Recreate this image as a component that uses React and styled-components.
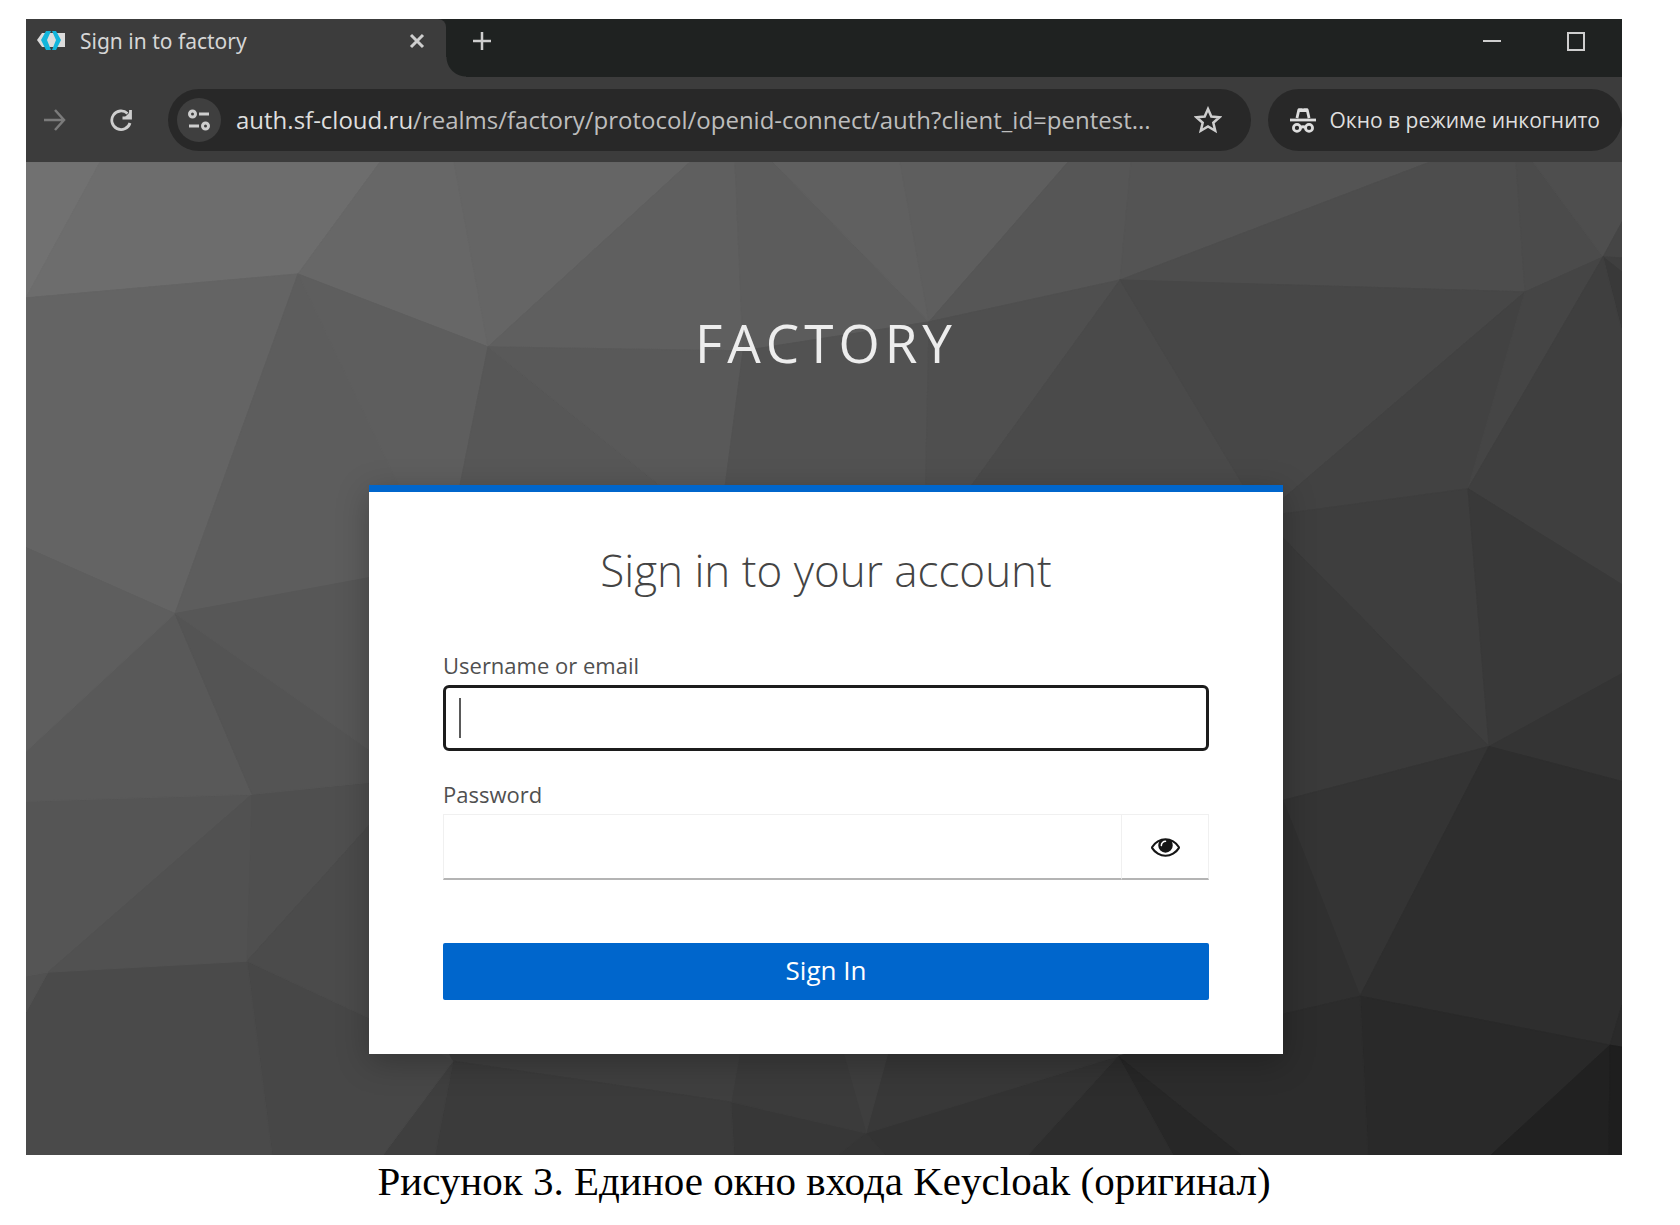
import React from "react";
import styled, { createGlobalStyle } from "styled-components";

const ui = '"Open Sans", "Noto Sans", sans-serif';

const GlobalStyle = createGlobalStyle`
  *, *::before, *::after { box-sizing: border-box; }
  body { margin: 0; background: #fff; }
  button, input { font: inherit; margin: 0; }
`;

const Figure = styled.figure`
  margin: 0;
  padding: 19px 58px 0 26px;
`;

const Caption = styled.figcaption`
  margin-top: 3px;
  font: 41px/46px "Liberation Serif", serif;
  color: #000;
  text-align: center;
`;

const BrowserWindow = styled.section`
  display: flex;
  flex-direction: column;
  overflow: hidden;
  background: #3c3c3c;
`;

const TabStrip = styled.header`
  display: flex;
  align-items: stretch;
  height: 58px;
  background: #1f2221;
`;

const Tab = styled.div`
  position: relative;
  display: flex;
  align-items: center;
  gap: 14px;
  width: 420px;
  padding: 0 20px 14px 10px;
  border-top-right-radius: 8px;
  background: #3c3c3c;
  color: #d6d6d6;
  font: 21px/30px "Noto Sans", "Open Sans", sans-serif;

  &::after {
    content: "";
    position: absolute;
    left: 100%;
    bottom: 0;
    width: 20px;
    height: 20px;
    background: radial-gradient(circle at 100% 0, #1f2221 19px, #3c3c3c 20px);
  }
`;

const TabTitle = styled.span`
  flex: 1;
  white-space: nowrap;
`;

const IconButton = styled.button`
  display: grid;
  place-items: center;
  flex: none;
  width: ${(p) => p.$size}px;
  height: ${(p) => p.$size}px;
  padding: 0;
  border: 0;
  border-radius: 50%;
  background: ${(p) => p.$fill || "transparent"};
  color: ${(p) => p.$color || "#cecece"};
`;

const StripActions = styled.div`
  display: flex;
  flex: 1;
  align-items: center;
  padding: 0 30px 14px 20px;
`;

const WindowControls = styled.div`
  display: flex;
  gap: 52px;
  margin-left: auto;
`;

const Toolbar = styled.nav`
  display: flex;
  align-items: center;
  height: 85px;
  padding-left: 7px;
`;

const NavButtons = styled.div`
  display: flex;
  gap: 22px;
  margin-right: 25px;
`;

const Pill = styled.div`
  display: flex;
  align-items: center;
  height: 62px;
  border-radius: 31px;
  background: #282828;
`;

const AddressBar = styled(Pill)`
  flex: 1;
  min-width: 0;
  gap: 15px;
  margin-right: 17px;
  padding: 0 23px 0 9px;
`;

const Url = styled.a`
  flex: 1;
  overflow: hidden;
  color: #bdbdbd;
  font: 24px/34px ${ui};
  text-decoration: none;
  text-overflow: ellipsis;
  white-space: nowrap;
`;

const Host = styled.span`
  color: #dedede;
`;

const IncognitoChip = styled(Pill)`
  gap: 14px;
  padding: 0 22px;
  color: #dedede;
  font: 21px/30px ${ui};
  white-space: nowrap;
`;

const Page = styled.main`
  position: relative;
  display: flex;
  flex-direction: column;
  align-items: center;
  padding: 149px 22px 101px 26px;
  background: #4a4a4a;
  font-family: ${ui};
`;

const Backdrop = styled.svg`
  position: absolute;
  inset: 0;
  width: 100%;
  height: 100%;
`;

const Realm = styled.h1`
  position: relative;
  margin: 0 0 110px;
  color: #ededed;
  font-size: 53px;
  font-weight: 400;
  line-height: 64px;
  letter-spacing: 5px;
  text-transform: uppercase;
`;

const Card = styled.form`
  position: relative;
  display: flex;
  flex-direction: column;
  width: 100%;
  max-width: 914px;
  padding: 48px 74px 54px;
  border-top: 7px solid #0066cc;
  background: #fff;
  box-shadow: 0 8px 30px rgba(0, 0, 0, 0.25);
`;

const CardTitle = styled.h2`
  margin: 0 0 50px;
  color: #444;
  font-size: 44px;
  font-weight: 300;
  line-height: 60px;
  text-align: center;
`;

const Field = styled.div`
  display: flex;
  flex-direction: column;
  gap: 5px;
  margin-bottom: ${(p) => p.$after}px;
`;

const Label = styled.label`
  color: #505050;
  font-size: 22px;
  line-height: 30px;
`;

const InputWrap = styled.div`
  position: relative;
  display: flex;
`;

const Caret = styled.span`
  position: absolute;
  top: 13px;
  left: 16px;
  width: 2px;
  height: 40px;
  background: #5a5a5a;
`;

const TextInput = styled.input`
  flex: 1;
  min-width: 0;
  height: 66px;
  padding: 0 16px;
  border: 1px solid #f0f0f0;
  border-bottom: 2px solid #b4b4b4;
  border-radius: 0;
  outline: 0;
  background: #fff;
  color: #151515;
  font-size: 26px;
`;

const ActiveInput = styled(TextInput)`
  border: 3px solid #1c1c1c;
  border-radius: 6px;
  caret-color: transparent;
`;

const RevealButton = styled.button`
  display: grid;
  place-items: center;
  width: 87px;
  height: 66px;
  padding: 0;
  border: 1px solid #f0f0f0;
  border-bottom: 2px solid #b4b4b4;
  border-left: 0;
  background: #fff;
  color: #151515;
`;

const SubmitButton = styled.button`
  height: 57px;
  padding: 0 0 4px;
  border: 0;
  border-radius: 2px;
  background: #0066cc;
  color: #fff;
  font-size: 26px;
  line-height: 36px;
`;

/* Facets of the low-poly wallpaper: fill, then the corner points. */
const facets = [
  ["#717171", "26,162 100,162 26,298"],
  ["#6d6d6d", "100,162 380,162 298,274 26,298"],
  ["#676767", "380,162 454,162 488,347 298,274"],
  ["#656565", "454,162 690,162 488,347"],
  ["#5f5f5f", "690,162 735,162 743,351 488,347"],
  ["#5c5c5c", "735,162 773,162 929,322 743,351"],
  ["#606060", "773,162 900,162 929,322"],
  ["#5e5e5e", "900,162 1068,162 929,322"],
  ["#565656", "1068,162 1131,162 1120,280 929,322"],
  ["#545454", "1131,162 1430,162 1120,280"],
  ["#4d4d4d", "1430,162 1516,162 1525,292 1120,280"],
  ["#4b4b4b", "1516,162 1533,162 1603,257 1525,292"],
  ["#4e4e4e", "1533,162 1622,162 1622,222 1603,257"],
  ["#454545", "1603,257 1622,222 1622,258"],
  ["#3f3f3f", "1603,257 1622,258 1622,272"],
  ["#393939", "1603,257 1622,272 1622,332"],
  ["#646464", "26,298 298,274 175,614 26,548"],
  ["#5d5d5d", "298,274 397,477 420,510 380,577 175,614"],
  ["#5e5e5e", "298,274 488,347 455,510 410,510"],
  ["#575757", "488,347 690,510 455,510"],
  ["#595959", "488,347 743,351 722,510 690,510"],
  ["#525252", "743,351 929,322 925,510 722,510"],
  ["#4f4f4f", "929,322 1120,280 954,510 925,510"],
  ["#4a4a4a", "1120,280 1262,517 954,510"],
  ["#474747", "1120,280 1525,292 1262,517"],
  ["#424242", "1525,292 1468,489 1262,517"],
  ["#454545", "1525,292 1603,257 1468,489"],
  ["#3f3f3f", "1603,257 1622,332 1622,585 1468,489"],
  ["#3e3e3e", "1262,517 1468,489 1489,747"],
  ["#393939", "1468,489 1622,585 1622,674 1489,747"],
  ["#3a3a3a", "1262,517 1489,747 1283,801"],
  ["#343434", "1489,747 1622,674 1622,782"],
  ["#343434", "1489,747 1360,997 1283,801"],
  ["#2e2e2e", "1489,747 1622,782 1622,1006 1610,1046 1360,997"],
  ["#303030", "1270,780 1283,801 1360,997 1270,1018"],
  ["#2a2a2a", "1610,1046 1622,1006 1622,1048"],
  ["#292929", "1360,997 1610,1046 1491,1156 1368,1156"],
  ["#212121", "1610,1046 1609,1156 1491,1156"],
  ["#1e1e1e", "1610,1046 1622,1048 1622,1156 1609,1156"],
  ["#2c2c2c", "1360,997 1368,1156 1241,1156 1118,1057 1270,1018"],
  ["#272727", "1118,1057 1241,1156 1173,1156"],
  ["#2d2d2d", "1118,1057 1173,1156 1028,1156"],
  ["#333333", "1118,1057 1028,1156 885,1156 866,1134"],
  ["#353535", "866,1134 885,1156 838,1156"],
  ["#373737", "731,1103 866,1134 838,1156 734,1156"],
  ["#383838", "866,1134 893,1035 1118,1040 1118,1057"],
  ["#3e3e3e", "866,1134 893,1035 838,1035"],
  ["#3b3b3b", "731,1103 743,1035 838,1035 866,1134"],
  ["#3f3f3f", "453,1062 440,1035 743,1035 731,1103"],
  ["#3b3b3b", "453,1062 731,1103 734,1156 435,1156"],
  ["#3f3f3f", "453,1062 435,1156 383,1156"],
  ["#474747", "247,962 380,1024 453,1062 383,1156 272,1156"],
  ["#4a4a4a", "247,962 272,1156 26,1156 26,1013 48,973"],
  ["#515151", "48,973 26,1013 26,977"],
  ["#555555", "48,973 26,977 26,802 252,795"],
  ["#515151", "252,795 247,962 48,973"],
  ["#4f4f4f", "252,795 380,782 380,814 247,962"],
  ["#4b4b4b", "247,962 380,814 380,1024"],
  ["#595959", "175,614 252,795 26,802 26,752"],
  ["#5e5e5e", "26,548 175,614 26,752"],
  ["#545454", "175,614 380,758 380,782 252,795"],
  ["#575757", "175,614 380,576 380,758"],
];

const Wallpaper = () => (
  <Backdrop viewBox="26 162 1596 994" preserveAspectRatio="none" aria-hidden="true">
    {facets.map(([fill, points], i) => (
      <polygon key={i} points={points} fill={fill} stroke={fill} strokeWidth="1" />
    ))}
  </Backdrop>
);

const Icon = ({ w = 24, h = w, box = `0 0 ${w} ${h}`, stroke = 2.5, children }) => (
  <svg width={w} height={h} viewBox={box} fill="none" stroke="currentColor" strokeWidth={stroke} aria-hidden="true">
    {children}
  </svg>
);

const Favicon = () => (
  <Icon w={30} h={20} stroke={0}>
    <path d="M6 2h23v14H6L1 9z" fill="#dcdcdc" />
    <path d="M10 0h5l-4 9 4 10h-5L5 9z" fill="#12b5dc" />
    <path d="M16 0h4l5 9-5 10h-4l4-10z" fill="#12b5dc" />
  </Icon>
);

const IncognitoIcon = () => (
  <Icon w={26} h={26} box="0 0 28 28" stroke={3}>
    <path d="M7.500 12 9.500 3h9l2 9" strokeLinejoin="round" />
    <path d="M9 1.500h4l1 1.500 1-1.500h4l.5 4h-11z" fill="currentColor" stroke="none" />
    <path d="M0 14h28" />
    <circle cx="7.500" cy="22.500" r="3.800" />
    <circle cx="20.500" cy="22.500" r="3.800" />
    <path d="M11 22q3-1.500 6 0" />
  </Icon>
);

const EyeIcon = () => (
  <Icon w={29} box="0 0 1792 1792" stroke={0}>
    <path
      fill="currentColor"
      d="M1664 960q-152-236-381-353 61 104 61 225 0 185-131.500 316.500t-316.500 131.500-316.500-131.500-131.500-316.500q0-121 61-225-229 117-381 353 133 205 333.500 326.500t434.500 121.500 434.500-121.500 333.500-326.500zm-720-384q0-20-14-34t-34-14q-125 0-214.500 89.500t-89.500 214.500q0 20 14 34t34 14 34-14 14-34q0-86 61-147t147-61q20 0 34-14t14-34zm848 384q0 34-20 69-140 230-376.500 368.500t-499.500 138.500-499.500-139-376.500-368q-20-35-20-69t20-69q140-229 376.500-368t499.500-139 499.500 139 376.500 368q20 35 20 69z"
    />
  </Icon>
);

export default function App() {
  return (
    <>
      <GlobalStyle />
      <Figure>
        <BrowserWindow>
          <TabStrip>
            <Tab>
              <Favicon />
              <TabTitle>Sign in to factory</TabTitle>
              <IconButton $size={18} type="button" aria-label="Close tab">
                <Icon w={18} stroke={3}>
                  <path d="M3 3l12 12M15 3 3 15" />
                </Icon>
              </IconButton>
            </Tab>
            <StripActions>
              <IconButton $size={32} type="button" aria-label="New tab">
                <Icon w={20}>
                  <path d="M10 1v18M1 10h18" />
                </Icon>
              </IconButton>
              <WindowControls>
                <IconButton $size={32} type="button" aria-label="Minimize">
                  <Icon w={20} stroke={2}>
                    <path d="M1 10h18" />
                  </Icon>
                </IconButton>
                <IconButton $size={32} type="button" aria-label="Maximize">
                  <Icon w={20} stroke={2}>
                    <path d="M2 2h16v17H2z" />
                  </Icon>
                </IconButton>
              </WindowControls>
            </StripActions>
          </TabStrip>
          <Toolbar>
            <NavButtons>
              <IconButton $size={44} $color="#7b7b7b" type="button" aria-label="Forward">
                <Icon w={24}>
                  <path d="M1 12h20M12 2l9 10-9 10" />
                </Icon>
              </IconButton>
              <IconButton $size={44} type="button" aria-label="Reload">
                <Icon w={24} stroke={2.8}>
                  <path d="M21 15A9.300 9.300 0 1 1 18.500 5.500" />
                  <path d="M21.500 2v8h-8" />
                  <path d="M21 4v6h-6z" fill="currentColor" stroke="none" />
                </Icon>
              </IconButton>
            </NavButtons>
            <AddressBar>
              <IconButton $size={44} $fill="#3f3f3f" type="button" aria-label="Site information">
                <Icon w={24} h={24} stroke={3}>
                  <circle cx="5.500" cy="6" r="3" />
                  <path d="M12 6h10M2 18h10" />
                  <circle cx="18.500" cy="18" r="3" />
                </Icon>
              </IconButton>
              <Url href="#auth">
                <Host>auth.sf-cloud.ru</Host>
                /realms/factory/protocol/openid-connect/auth?client_id=pentest...
              </Url>
              <IconButton $size={40} type="button" aria-label="Bookmark this page">
                <Icon w={28}>
                  <path d="M14 3l3.300 7.500 8.200.8-6.200 5.400 1.900 8-7.200-4.300-7.200 4.300 1.900-8-6.200-5.400 8.200-.8z" />
                </Icon>
              </IconButton>
            </AddressBar>
            <IncognitoChip>
              <IncognitoIcon />
              <span>Окно в режиме инкогнито</span>
            </IncognitoChip>
          </Toolbar>
          <Page>
            <Wallpaper />
            <Realm>Factory</Realm>
            <Card onSubmit={(e) => e.preventDefault()}>
              <CardTitle>Sign in to your account</CardTitle>
              <Field $after={28}>
                <Label htmlFor="username">Username or email</Label>
                <InputWrap>
                  <ActiveInput id="username" type="text" autoComplete="off" />
                  <Caret aria-hidden="true" />
                </InputWrap>
              </Field>
              <Field $after={63}>
                <Label htmlFor="password">Password</Label>
                <InputWrap>
                  <TextInput id="password" type="password" autoComplete="off" />
                  <RevealButton type="button" aria-label="Show password">
                    <EyeIcon />
                  </RevealButton>
                </InputWrap>
              </Field>
              <SubmitButton type="submit">Sign In</SubmitButton>
            </Card>
          </Page>
        </BrowserWindow>
        <Caption>Рисунок 3. Единое окно входа Keycloak (оригинал)</Caption>
      </Figure>
    </>
  );
}
